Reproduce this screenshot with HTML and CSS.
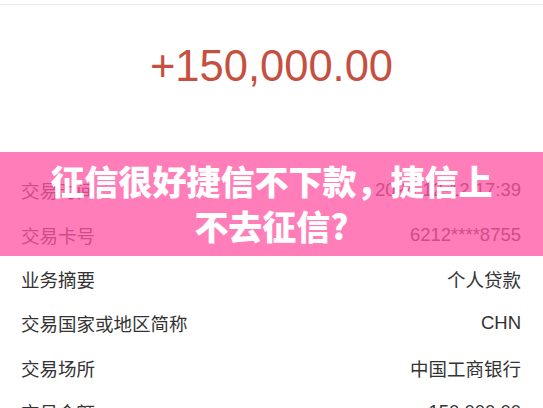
FILE: index.html
```html
<!DOCTYPE html>
<html lang="zh-CN">
<head>
    <meta charset="UTF-8">
    <meta name="viewport" content="width=device-width, initial-scale=1.0">
    <title>交易详情</title>
    <link rel="stylesheet" href="styles.css">
</head>
<body>
    <div class="topbar"></div>
    <div class="amount">+150,000.00</div>

    <div class="details">
        <div class="row"><span>交易时间</span><span>2024-12-12 17:39</span></div>
        <div class="row"><span>交易卡号</span><span>6212****8755</span></div>
        <div class="row"><span>业务摘要</span><span>个人贷款</span></div>
        <div class="row"><span>交易国家或地区简称</span><span>CHN</span></div>
        <div class="row"><span>交易场所</span><span>中国工商银行</span></div>
        <div class="row"><span>交易金额</span><span>150,000.00</span></div>
    </div>

    <div class="banner">
        <h1>征信很好捷信不下款，捷信上<br>不去征信?</h1>
    </div>
</body>
</html>
```

FILE: styles.css
```css
body {
    margin: 0;
    background-color: #fff;
    font-family: "Liberation Sans", "Noto Sans CJK SC", sans-serif;
    color: #333;
    overflow: hidden;
}
.topbar {
    height: 4px;
    border-bottom: 1px solid #ececec;
}
.amount {
    margin-top: 31px;
    height: 60px;
    line-height: 60px;
    font-size: 43.5px;
    text-align: center;
    color: #c5503f;
}
.details {
    margin-top: 72px;
    padding: 0 22px 0 21px;
}
.row {
    height: 44.4px;
    display: flex;
    align-items: center;
    justify-content: space-between;
    font-size: 18.5px;
}
.banner {
    position: absolute;
    top: 152px;
    left: 0;
    right: 0;
    height: 104px;
    box-sizing: border-box;
    padding-top: 6px;
    background-color: rgba(255, 84, 162, 0.76);
}
.banner h1 {
    margin: 0;
    font-family: "Noto Sans CJK SC", sans-serif;
    font-weight: 900;
    font-size: 34px;
    line-height: 45px;
    text-align: center;
    color: #fff;
}
```
